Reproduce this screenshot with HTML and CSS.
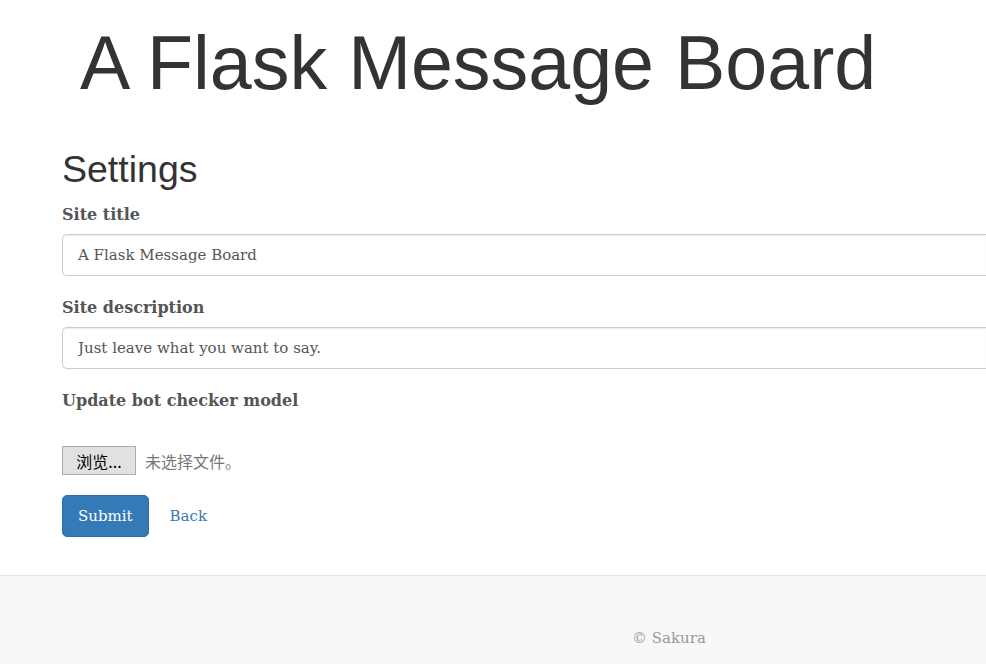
FILE: index.html
```html
<!DOCTYPE html>
<html lang="zh">
<head>
<meta charset="utf-8">
<title>Settings - A Flask Message Board</title>
<link rel="stylesheet" href="styles.css">
</head>
<body>
<header class="jumbo">
  <h1 class="jumbo-title">A Flask Message Board</h1>
</header>
<main class="page">
  <h2 class="page-title">Settings</h2>
  <form class="settings-form">
    <div class="form-group">
      <label class="field-label" for="title">Site title</label>
      <input class="field-input" id="title" type="text" value="A Flask Message Board">
    </div>
    <div class="form-group">
      <label class="field-label" for="desc">Site description</label>
      <input class="field-input" id="desc" type="text" value="Just leave what you want to say.">
    </div>
    <div class="form-group file-group">
      <label class="field-label">Update bot checker model</label>
      <div class="file-row">
        <span class="file-button">浏览...</span>
        <span class="file-status">未选择文件。</span>
      </div>
    </div>
    <div class="actions">
      <button class="btn-submit" type="button">Submit</button>
      <a class="back-link" href="#">Back</a>
    </div>
  </form>
</main>
<footer class="footer">
  <p class="footer-text">© Sakura</p>
</footer>
</body>
</html>
```

FILE: styles.css
```css
html, body {
  margin: 0;
  padding: 0;
  background: #fff;
}
body {
  font-family: "DejaVu Serif", "Liberation Serif", serif;
  font-size: 15px;
  line-height: 24px;
  color: #333;
}
.jumbo {
  padding: 22px 0 0 80px;
}
.jumbo-title {
  margin: 0;
  font-family: "Liberation Sans", Arial, sans-serif;
  font-weight: 400;
  font-size: 75.4px;
  line-height: 83px;
  color: #333;
  white-space: nowrap;
}
.page {
  padding: 44px 0 0 62px;
}
.page-title {
  margin: 0 0 13px;
  font-family: "Liberation Sans", Arial, sans-serif;
  font-weight: 400;
  font-size: 37.5px;
  line-height: 41px;
  color: #333;
}
.form-group {
  margin-bottom: 20px;
}
.field-label {
  display: block;
  font-weight: 700;
  font-size: 16px;
  color: #555;
  margin-bottom: 7px;
}
.field-input {
  display: block;
  box-sizing: border-box;
  width: 100%;
  height: 42px;
  padding: 7px 15px;
  font-family: inherit;
  font-size: 15px;
  color: #555;
  background: #fff;
  border: 1px solid #ccc;
  border-right: none;
  border-radius: 5px 0 0 5px;
  box-shadow: inset 0 1px 1px rgba(0,0,0,.075);
  outline: none;
}
.file-group .field-label {
  margin-bottom: 33px;
}
.file-row {
  display: flex;
  align-items: center;
  gap: 9px;
  height: 29px;
}
.file-button {
  box-sizing: border-box;
  display: inline-flex;
  align-items: center;
  justify-content: center;
  width: 74px;
  height: 29px;
  background: #e1e1e1;
  border: 1px solid #adadad;
  font-family: "Noto Sans CJK SC", sans-serif;
  font-size: 16px;
  color: #000;
}
.file-status {
  font-family: "Noto Sans CJK SC", sans-serif;
  font-size: 16px;
  color: #777;
}
.actions {
  display: flex;
  align-items: center;
  gap: 21px;
}
.btn-submit {
  box-sizing: border-box;
  height: 42px;
  padding: 0 15px;
  font-family: inherit;
  font-size: 15px;
  color: #fff;
  background: #337ab7;
  border: 1px solid #2e6da4;
  border-radius: 5px;
}
.back-link {
  color: #337ab7;
  text-decoration: none;
}
.footer {
  margin-top: 38px;
  border-top: 1px solid #e5e5e5;
  background: #f8f8f8;
  height: 100px;
}
.footer-text {
  margin: 0;
  padding: 50px 0 0 632px;
  color: #999;
}
```
